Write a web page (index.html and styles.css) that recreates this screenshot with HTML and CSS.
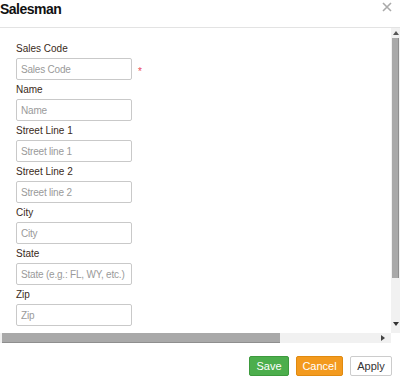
FILE: index.html
```html
<!DOCTYPE html>
<html lang="en">
<head>
	<meta charset="utf-8">
	<title>Salesman</title>
	<link rel="stylesheet" href="styles.css">
</head>
<body>
	<div class="modal">
		<div class="modalHead">
			<h1 class="title">Salesman</h1>
			<button type="button" class="btnClose">
				<svg width="10" height="10" viewBox="0 0 10 10"><path d="M1 1L9 9M9 1L1 9" stroke="#aaa" stroke-width="1.6"/></svg>
			</button>
		</div>
		<div class="modalBody">
			<div class="formArea">
				<div class="field">
					<label>Sales Code</label>
					<div class="row"><input type="text" placeholder="Sales Code"><span class="req">*</span></div>
				</div>
				<div class="field">
					<label>Name</label>
					<div class="row"><input type="text" placeholder="Name"></div>
				</div>
				<div class="field">
					<label>Street Line 1</label>
					<div class="row"><input type="text" placeholder="Street line 1"></div>
				</div>
				<div class="field">
					<label>Street Line 2</label>
					<div class="row"><input type="text" placeholder="Street line 2"></div>
				</div>
				<div class="field">
					<label>City</label>
					<div class="row"><input type="text" placeholder="City"></div>
				</div>
				<div class="field">
					<label>State</label>
					<div class="row"><input type="text" placeholder="State (e.g.: FL, WY, etc.)"></div>
				</div>
				<div class="field">
					<label>Zip</label>
					<div class="row"><input type="text" placeholder="Zip"></div>
				</div>
			</div>
			<div class="vScroll">
				<span class="arrow up"></span>
				<span class="thumb"></span>
				<span class="arrow down"></span>
			</div>
		</div>
		<div class="hScroll">
			<span class="thumb"></span>
			<span class="arrow right"></span>
		</div>
		<div class="modalFoot">
			<button type="button" class="btn save">Save</button>
			<button type="button" class="btn cancel">Cancel</button>
			<button type="button" class="btn apply">Apply</button>
		</div>
	</div>
</body>
</html>
```

FILE: styles.css
```css
* {margin:0; padding:0; box-sizing:border-box;}
body {background:#fff; font-family:"Liberation Sans", Arial, sans-serif; color:#333;}
.modal {width:400px; height:377px; display:flex; flex-direction:column; overflow:hidden;}
.modalHead {height:28px; display:flex; justify-content:space-between; align-items:flex-start; border-bottom:1px solid #e3e3e3;}
.modalHead .title {padding-top:1px; font-size:14px; font-weight:bold; color:#111; letter-spacing:-0.5px;}
.modalHead .btnClose {margin:2px 8px 0 0; width:10px; height:10px; border:0; background:none; display:flex;}
.modalBody {height:305px; display:flex;}
.formArea {flex:1; padding:15px 0 0 16px;}
.field {margin-bottom:4px;}
.field label {display:block; height:12px; line-height:12px; margin-bottom:3px; font-size:10px; color:#3a2a20;}
.field .row {display:flex; align-items:center;}
.field input {width:116px; height:22px; padding:0 4px; font-family:inherit; font-size:10px; letter-spacing:-0.2px; color:#333; border:1px solid #c9c9c9; border-radius:2px; outline:none;}
.field input::placeholder {color:#9a9a9a;}
.field .req {margin-left:6px; margin-top:5px; color:#e8485a; font-size:10px;}
.vScroll {width:9px; display:flex; flex-direction:column; align-items:center; background:#f1f1f1; padding:3px 0;}
.vScroll .thumb {width:7px; height:240px; margin-top:3px; background:#a9a9a9; border-right:1px solid #8e8e8e;}
.vScroll .arrow.down {margin-top:auto; margin-bottom:4px;}
.arrow {width:0; height:0; border-style:solid;}
.arrow.up {border-width:0 3px 4px 3px; border-color:transparent transparent #555 transparent;}
.arrow.down {border-width:4px 3px 0 3px; border-color:#333 transparent transparent transparent;}
.arrow.right {border-width:3px 0 3px 4px; border-color:transparent transparent transparent #444;}
.hScroll {height:10px; width:391px; display:flex; align-items:center; background:#f1f1f1; padding:0 6px 0 2px;}
.hScroll .thumb {width:278px; height:10px; background:#a9a9a9; border-bottom:1px solid #8e8e8e;}
.hScroll .arrow.right {margin-left:auto;}
.modalFoot {flex:1; display:flex; justify-content:flex-end; align-items:flex-start; gap:7px; padding:13px 8px 0 0;}
.btn {height:20px; padding:0; font-family:inherit; font-size:11px; border-radius:2px; border:1px solid;}
.btn.save {width:40px; color:#fff; background:#4cae4c; border-color:#3d9a3d;}
.btn.cancel {width:47px; color:#fff; background:#f39a1e; border-color:#e08a10;}
.btn.apply {width:42px; color:#333; background:#fff; border-color:#ccc;}
```
